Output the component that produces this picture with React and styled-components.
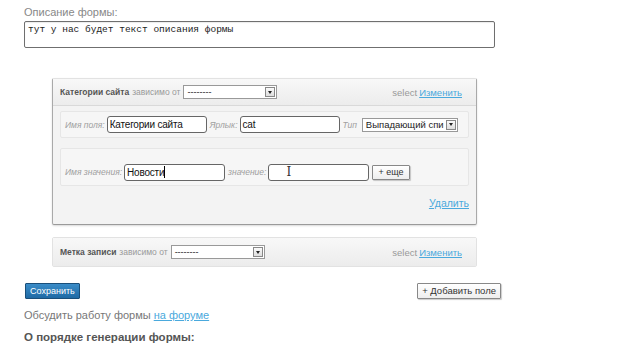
import React from 'react';
import styled, { createGlobalStyle } from 'styled-components';

const GlobalStyle = createGlobalStyle`
  html, body {
    margin: 0;
    padding: 0;
    background: #fff;
  }
  body {
    font-family: "Liberation Sans", Arial, sans-serif;
    color: #555;
  }
`;

const Page = styled.div`
  width: 640px;
  height: 360px;
  overflow: hidden;
  padding: 6px 0 0 24px;
  box-sizing: border-box;
`;

const Caption = styled.div`
  font-size: 11px;
  color: #888;
  line-height: 13px;
`;

const Description = styled.div`
  margin-top: 2px;
  width: 471px;
  height: 27px;
  box-sizing: border-box;
  border: 1px solid #6f6f6f;
  border-radius: 2px;
  padding: 2px 3px;
  font-family: "Liberation Mono", "Courier New", monospace;
  font-size: 9.5px;
  color: #222;
  box-shadow: inset 0 1px 1px rgba(0, 0, 0, 0.08);
`;

const Panel = styled.div`
  margin: ${p => p.$top}px 0 0 28px;
  width: 425px;
  box-sizing: border-box;
  border: 1px solid #e2e2e2;
  border-radius: 2px;
  background: #f3f3f3;
  ${p => p.$open && `
    border-color: #e2e2e2 #a9a9a9 #9a9a9a #a9a9a9;
    box-shadow: 0 1px 2px rgba(0,0,0,0.15);
  `}
`;

const PanelHead = styled.div`
  height: ${p => p.$h}px;
  display: flex;
  align-items: center;
  padding: 0 14px 0 7px;
  background: linear-gradient(#f8f8f8, #ececec);
  border-bottom: ${p => (p.$open ? '1px solid #d9d9d9' : 'none')};
  font-size: 8.5px;
  color: #999;
  white-space: nowrap;
`;

const HeadTitle = styled.b`
  color: #555;
  margin-right: 3px;
`;

const Spacer = styled.div`
  flex: 1;
`;

const SelectWord = styled.span`
  font-size: 9.5px;
`;

const Link = styled.a`
  color: #4aa9dd;
  text-decoration: underline;
  margin-left: ${p => (p.$gap ? 2 : 0)}px;
  font-size: ${p => p.$size || 10}px;
  cursor: pointer;
`;

const SelectBox = styled.div`
  width: ${p => p.$w}px;
  height: 14px;
  box-sizing: border-box;
  border: 1px solid #999;
  background: #fff;
  display: flex;
  align-items: center;
  justify-content: space-between;
  padding-left: 3px;
  margin-left: 3px;
  font-size: ${p => p.$fs || 9}px;
  color: #222;
  white-space: nowrap;
  overflow: hidden;
`;

const Arrow = styled.span`
  flex: none;
  width: 10px;
  height: 10px;
  margin: 0 1px 0 2px;
  border: 1px solid #888;
  box-sizing: border-box;
  background: linear-gradient(#fafafa, #ddd);
  display: flex;
  align-items: center;
  justify-content: center;
  &::after {
    content: '';
    border-left: 2.5px solid transparent;
    border-right: 2.5px solid transparent;
    border-top: 3px solid #222;
  }
`;

const PanelBody = styled.div`
  padding: 5px 7px 0 7px;
  height: 118px;
  box-sizing: border-box;
  display: flex;
  flex-direction: column;
`;

const FieldRow = styled.div`
  height: ${p => p.$h}px;
  margin-bottom: ${p => p.$mb || 0}px;
  background: #f6f6f6;
  border: 1px solid #e6e6e6;
  border-radius: 2px;
  display: flex;
  align-items: center;
  padding-left: ${p => p.$pl || 4}px;
  padding-top: ${p => p.$pt || 0}px;
  box-sizing: border-box;
`;

const FieldLabel = styled.span`
  font-size: 8.5px;
  font-style: italic;
  color: #a0a0a0;
  margin-right: 2px;
  white-space: nowrap;
`;

const TextInput = styled.div`
  width: ${p => p.$w || 101}px;
  height: 17px;
  box-sizing: border-box;
  border: 1px solid #666;
  border-radius: 3px;
  background: #fff;
  margin-right: 3px;
  padding-left: 2px;
  font-size: 10px;
  letter-spacing: -0.2px;
  line-height: 15px;
  color: #111;
  display: flex;
  align-items: center;
  position: relative;
  white-space: nowrap;
`;

const Caret = styled.span`
  width: 1px;
  height: 12px;
  background: #000;
`;

const IBeam = styled.span`
  position: absolute;
  left: 17px;
  top: 1px;
  font-family: "DejaVu Serif", serif;
  font-size: 12px;
  line-height: 13px;
  color: #333;
`;

const SmallButton = styled.button`
  height: 15px;
  padding: 0 5px;
  font-family: inherit;
  font-size: 9px;
  color: #333;
  background: linear-gradient(#fff, #eee);
  border: 1px solid #888;
  border-radius: 1px;
  box-shadow: 1px 1px 1px rgba(0,0,0,0.2);
  line-height: 12px;
  white-space: nowrap;
`;

const DeleteRow = styled.div`
  display: flex;
  justify-content: flex-end;
  margin-top: 11px;
`;

const Actions = styled.div`
  margin-top: 16px;
  width: 477px;
  display: flex;
  justify-content: space-between;
  align-items: center;
`;

const SaveButton = styled.button`
  margin-left: 1px;
  height: 16px;
  padding: 0 4px;
  font-family: inherit;
  font-size: 9px;
  color: #fff;
  background: linear-gradient(#3a8cc8, #1f6aa5);
  border: 1px solid #1a4f7a;
  border-radius: 1px;
  line-height: 12px;
`;

const AddButton = styled(SmallButton)`
  height: 16px;
  padding: 0 4px;
  font-size: 9.5px;
`;

const Discuss = styled.p`
  margin: 10px 0 0;
  font-size: 11px;
  color: #777;
`;

const SubTitle = styled.p`
  margin: 10px 0 0;
  font-size: 11.5px;
  font-weight: bold;
  color: #555;
`;

export default function App() {
  return (
    <Page>
      <GlobalStyle />
      <Caption>Описание формы:</Caption>
      <Description>тут у нас будет текст описания формы</Description>

      <Panel $top={30} $open>
        <PanelHead $h={26} $open>
          <HeadTitle>Категории сайта</HeadTitle> зависимо от
          <SelectBox $w={94}>--------<Arrow /></SelectBox>
          <Spacer />
          <SelectWord>select</SelectWord><Link $gap $size={9.5}>Изменить</Link>
        </PanelHead>
        <PanelBody>
          <FieldRow $h={27} $mb={10}>
            <FieldLabel>Имя поля:</FieldLabel>
            <TextInput $w={100}>Категории сайта</TextInput>
            <FieldLabel>Ярлык:</FieldLabel>
            <TextInput $w={100}>cat</TextInput>
            <FieldLabel>Тип</FieldLabel>
            <SelectBox $w={96} $fs={9.5}>Выпадающий спи<Arrow /></SelectBox>
          </FieldRow>
          <FieldRow $h={38} $pt={10}>
            <FieldLabel>Имя значения:</FieldLabel>
            <TextInput $w={101}>Новости<Caret /></TextInput>
            <FieldLabel>значение:</FieldLabel>
            <TextInput $w={101}><IBeam>I</IBeam></TextInput>
            <SmallButton>+ еще</SmallButton>
          </FieldRow>
          <DeleteRow>
            <Link $size={10.5}>Удалить</Link>
          </DeleteRow>
        </PanelBody>
      </Panel>

      <Panel $top={12}>
        <PanelHead $h={28}>
          <HeadTitle>Метка записи</HeadTitle> зависимо от
          <SelectBox $w={94}>--------<Arrow /></SelectBox>
          <Spacer />
          <SelectWord>select</SelectWord><Link $gap $size={9.5}>Изменить</Link>
        </PanelHead>
      </Panel>

      <Actions>
        <SaveButton>Сохранить</SaveButton>
        <AddButton>+ Добавить поле</AddButton>
      </Actions>
      <Discuss>
        Обсудить работу формы <Link $size={11}>на форуме</Link>
      </Discuss>
      <SubTitle>О порядке генерации формы:</SubTitle>
    </Page>
  );
}
